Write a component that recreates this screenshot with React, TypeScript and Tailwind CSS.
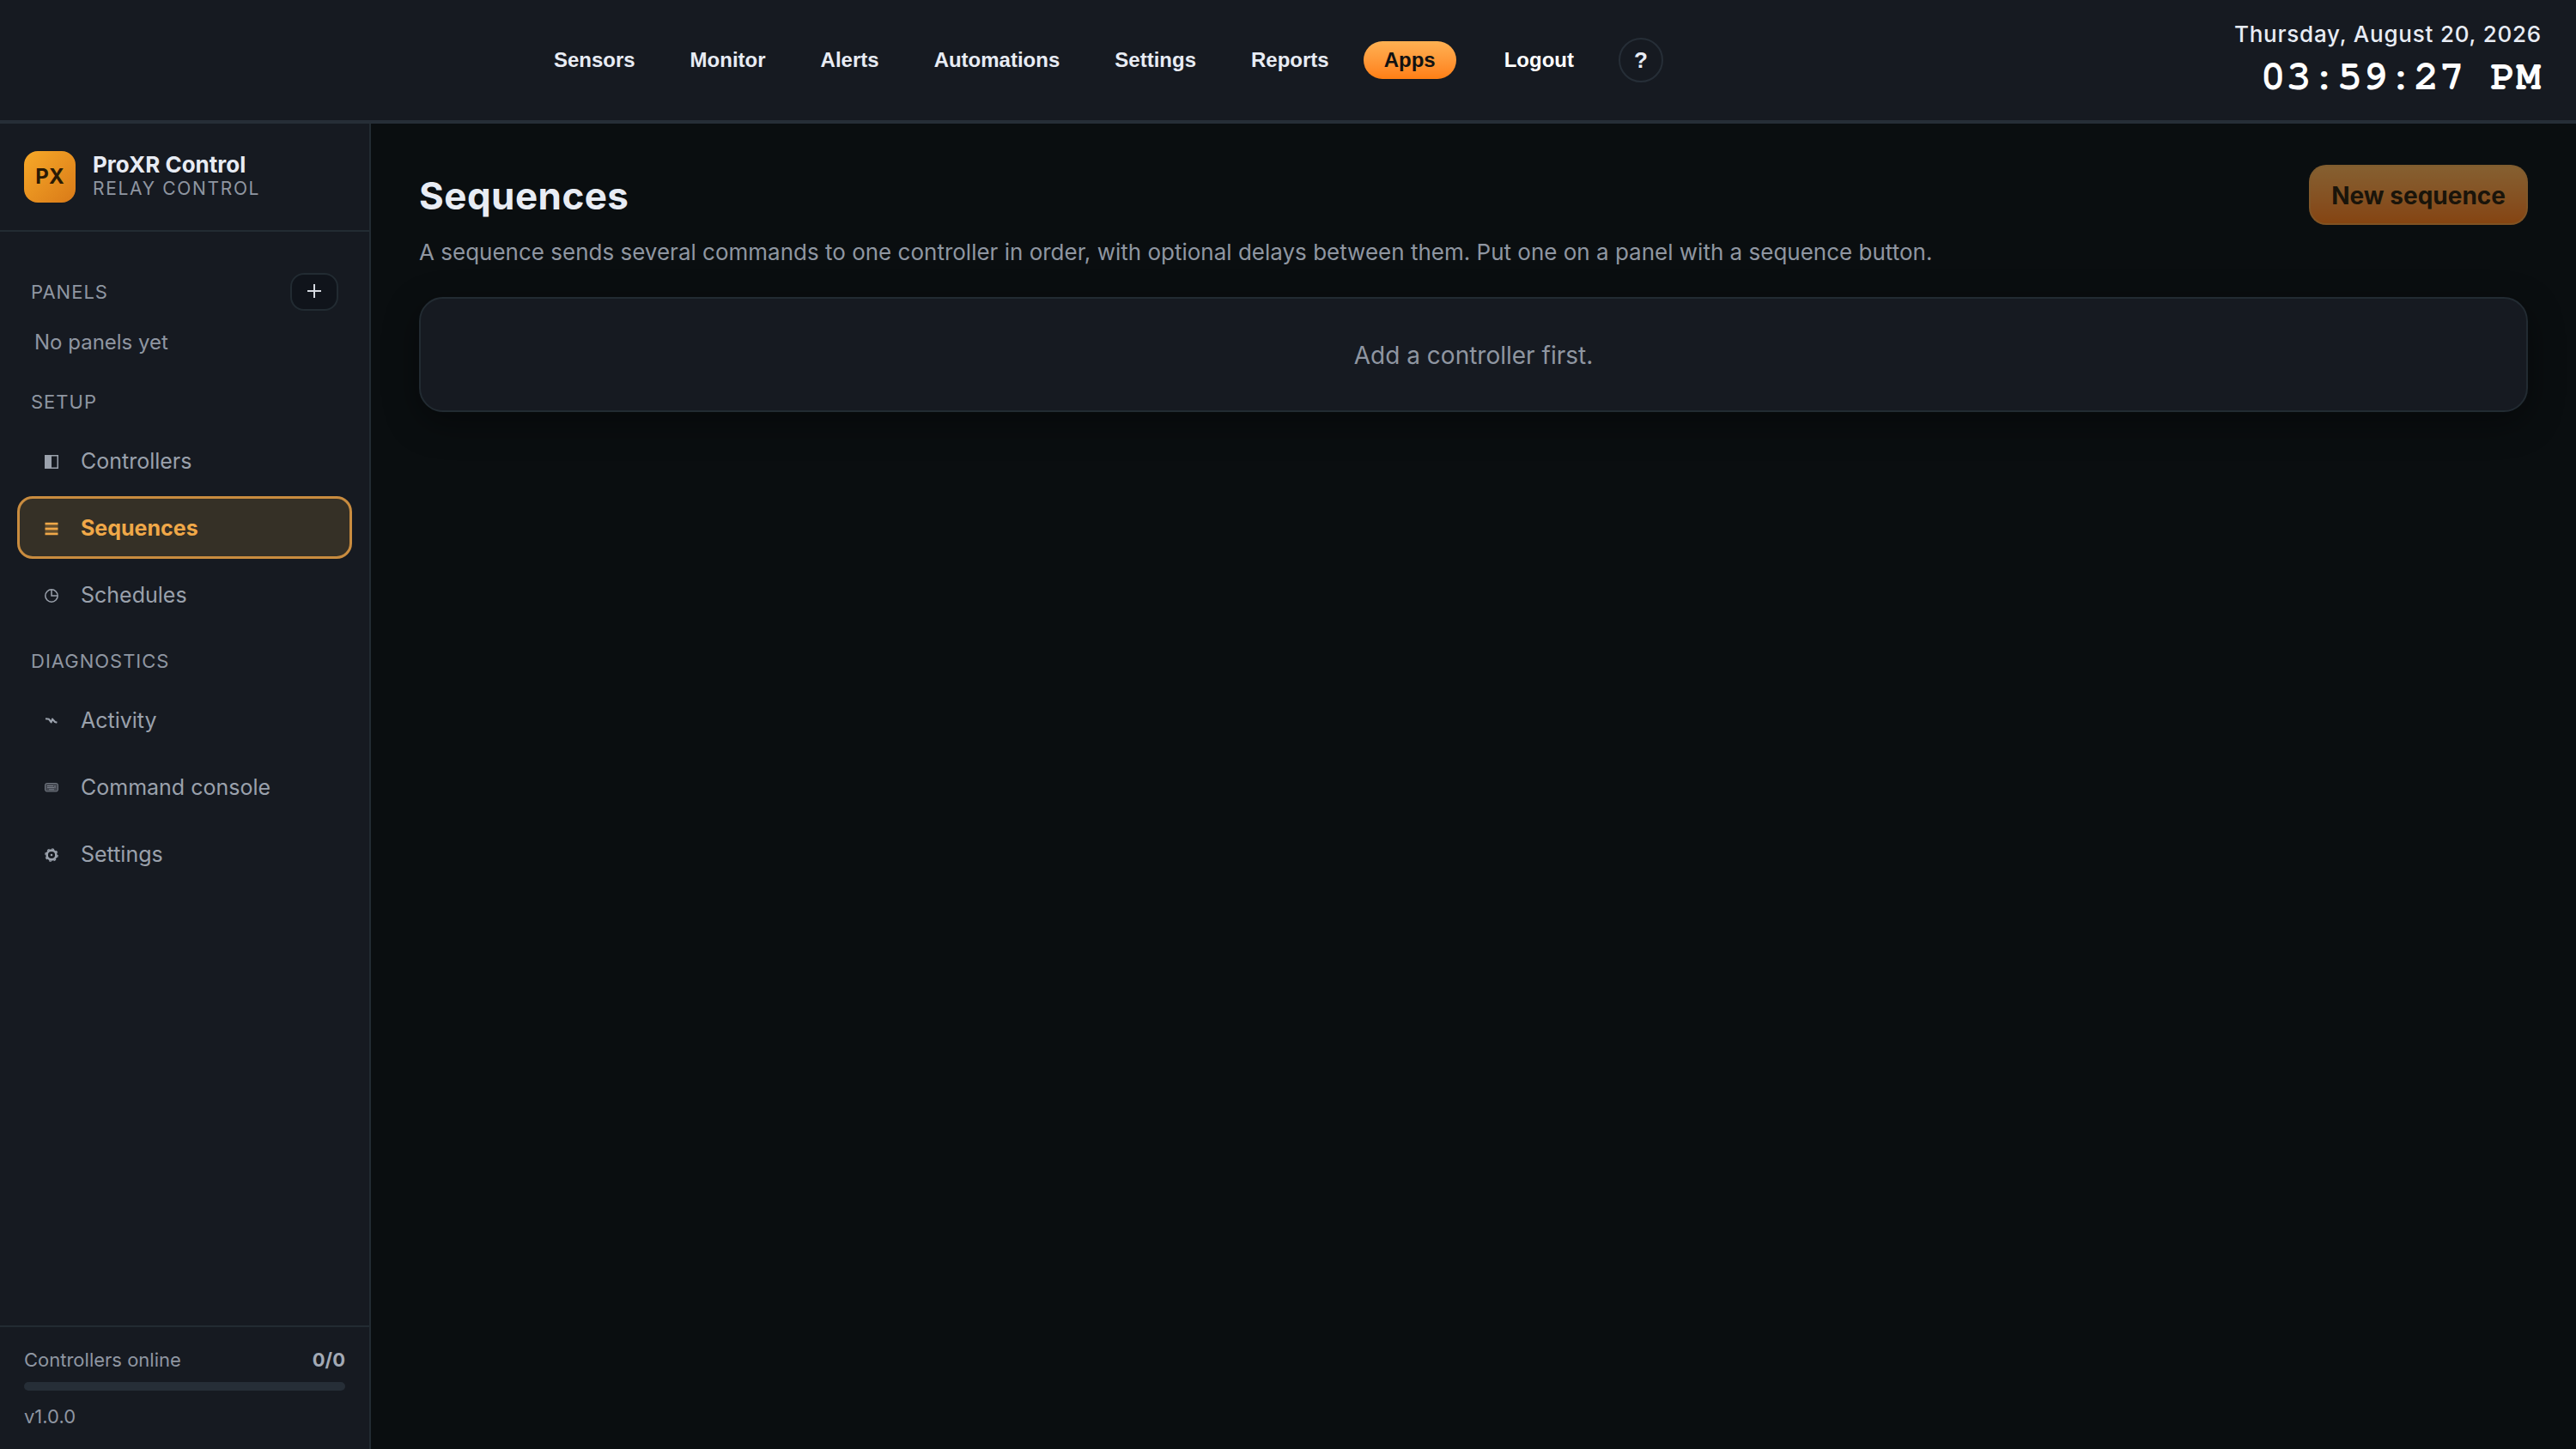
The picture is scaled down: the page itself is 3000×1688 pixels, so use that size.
import type { ReactNode } from "react";

const links = ["Sensors", "Monitor", "Alerts", "Automations", "Settings", "Reports"];

function Icon({ children }: { children: ReactNode }) {
  return (
    <span className="flex w-9 justify-center">
      <svg viewBox="0 0 16 16" className="size-4" fill="none" stroke="currentColor" aria-hidden="true">
        {children}
      </svg>
    </span>
  );
}

const panelIcon = (
  <Icon>
    <rect x="0.75" y="0.75" width="14.5" height="14.5" strokeWidth="1.5" />
    <rect x="0.5" y="0.5" width="7.5" height="15" fill="currentColor" stroke="none" />
  </Icon>
);
const listIcon = (
  <Icon>
    <path d="M0.5 2.2h15M0.5 8h15M0.5 13.8h15" strokeWidth="2.8" />
    <path d="M0.5 5h15M0.5 11h15" strokeWidth="2" opacity="0.25" />
  </Icon>
);
const clockIcon = (
  <Icon>
    <circle cx="8" cy="8" r="7.2" strokeWidth="1.5" />
    <path d="M8 1v7h7" strokeWidth="1.5" />
  </Icon>
);
const pulseIcon = (
  <Icon>
    <path d="M1 5.2l4 .6 2.6 3.6 1.4-3.8 3 3.4 2.4.8" strokeWidth="2.1" strokeLinejoin="round" />
  </Icon>
);
const keyboardIcon = (
  <Icon>
    <rect x="0.5" y="2.5" width="15" height="9.5" rx="2" fill="currentColor" fillOpacity="0.35" strokeOpacity="0.6" />
    <path d="M3 5.5h7M3 7.5h8M5 9.8h6M12 5v3" strokeOpacity="0.6" />
  </Icon>
);
const gearIcon = (
  <Icon>
    <circle cx="8" cy="8" r="5.4" strokeWidth="2.6" />
    <circle cx="8" cy="8" r="7.1" strokeWidth="1.4" strokeDasharray="2.8 2.78" />
    <circle cx="8" cy="8" r="1.3" fill="currentColor" stroke="none" />
  </Icon>
);

function NavItem({ icon, label, active }: { icon: ReactNode; label: string; active?: boolean }) {
  return (
    <a
      href="#"
      aria-current={active ? "page" : undefined}
      className={
        active
          ? "flex h-[73px] items-center gap-4 rounded-[18px] border-3 border-[#c98c3f] bg-[#353026] px-[19px] pt-0.5 text-[25px] font-bold text-[#f0a848]"
          : "flex h-[73px] items-center gap-4 rounded-[18px] border-3 border-transparent px-[19px] pt-0.5 text-[25px] text-[#9aa1ac]"
      }
    >
      {icon}
      {label}
    </a>
  );
}

function SectionLabel({ children }: { children: ReactNode }) {
  return <h2 className="text-[22px] leading-8 tracking-[1px] text-[#8f96a1]">{children}</h2>;
}

function Section({ title, children }: { title: string; children: ReactNode }) {
  return (
    <section>
      <div className="mb-4 px-4">
        <SectionLabel>{title}</SectionLabel>
      </div>
      <div className="flex flex-col gap-[5px]">{children}</div>
    </section>
  );
}

export default function App() {
  return (
    <div className="flex min-h-screen flex-col bg-[#0a0e10] font-[Inter,sans-serif] text-[#e8ecf4]">
      <header className="flex h-36 items-center gap-11 border-b-4 border-[#262e37] bg-[#161a21] pr-10">
        <nav className="flex flex-1 items-center justify-center gap-4 font-['Liberation_Sans',Arial,sans-serif] text-2xl font-bold">
          {links.map((l) => (
            <a key={l} href="#" className="flex h-11 items-center px-6">
              {l}
            </a>
          ))}
          <a
            href="#"
            aria-current="page"
            className="flex h-11 items-center rounded-full bg-linear-to-b from-[#ffb152] to-[#ff7f12] px-6 text-[#111111]"
          >
            Apps
          </a>
          <a href="#" className="ml-4 flex h-11 items-center px-6 text-white">
            Logout
          </a>
          <button type="button" aria-label="Help" className="ml-3 size-[52px] rounded-full border-2 border-[#262e37] text-[26px]">
            ?
          </button>
        </nav>
        <div className="flex flex-col items-end">
          <time className="text-[26px] leading-10 font-medium tracking-[0.03em]">Thursday, August 20, 2026</time>
          <time className="font-['FreeMono','Courier_New','Liberation_Mono',monospace] text-5xl leading-[60px] font-bold tracking-[0.02em] text-white">
            03:59:27 PM
          </time>
        </div>
      </header>

      <div className="flex flex-1">
        <aside className="flex w-[432px] flex-col border-r-2 border-[#222b32] bg-[#161a21]">
          <div className="flex items-center gap-5 border-b-2 border-[#222b32] px-7 py-8">
            <div className="flex size-[60px] items-center justify-center rounded-2xl bg-linear-to-br from-[#f7a928] to-[#d97a18] text-2xl font-bold text-[#2a1a05]">
              PX
            </div>
            <div>
              <div className="text-[26px] leading-7 font-bold">ProXR Control</div>
              <div className="text-[21px] leading-7 tracking-[0.08em] text-[#8f96a1]">RELAY CONTROL</div>
            </div>
          </div>

          <nav className="flex flex-1 flex-col gap-[25px] px-5 pt-12">
            <section>
              <div className="flex items-center justify-between px-4">
                <SectionLabel>PANELS</SectionLabel>
                <button
                  type="button"
                  aria-label="Add panel"
                  className="flex h-11 w-14 items-center justify-center rounded-2xl border-2 border-[#222b32] bg-[#10141b]"
                >
                  <svg viewBox="0 0 16 16" className="mb-0.5 size-4" stroke="#d5d9e0" strokeWidth="2" aria-hidden="true">
                    <path d="M8 0v16M0 8h16" />
                  </svg>
                </button>
              </div>
              <p className="mt-[9px] px-5 text-2xl leading-[56px] text-[#8f96a1]">No panels yet</p>
            </section>
            <Section title="SETUP">
              <NavItem icon={panelIcon} label="Controllers" />
              <NavItem icon={listIcon} label="Sequences" active />
              <NavItem icon={clockIcon} label="Schedules" />
            </Section>
            <Section title="DIAGNOSTICS">
              <NavItem icon={pulseIcon} label="Activity" />
              <NavItem icon={keyboardIcon} label="Command console" />
              <NavItem icon={gearIcon} label="Settings" />
            </Section>
          </nav>

          <footer className="border-t-2 border-[#222b32] px-7 py-[22px] text-[22px] leading-8 text-[#8f96a1]">
            <div className="flex justify-between">
              <span>Controllers online</span>
              <span className="font-bold text-[#a3aab5]">0/0</span>
            </div>
            <div className="mt-2.5 h-2.5 rounded-full bg-[#262e37]" />
            <div className="mt-3.5">v1.0.0</div>
          </footer>
        </aside>

        <main className="flex-1 px-14 pt-12">
          <div className="flex items-center justify-between">
            <h1 className="pt-0.5 text-[44px] font-bold tracking-[0.01em]">Sequences</h1>
            <button
              type="button"
              disabled
              className="h-[70px] rounded-[20px] border-2 border-[#f0a64c]/60 bg-linear-to-b from-[#ffb152] to-[#ff7a0e] bg-origin-border px-6 pt-0.5 text-[28px] font-bold text-[#2a1a05] opacity-50"
            >
              New sequence
            </button>
          </div>
          <p className="mt-3 text-[26px] leading-10 text-[#8f96a1]">
            A sequence sends several commands to one controller in order, with optional delays between them. Put one on a
            panel with a sequence button.
          </p>
          <div className="mt-8 flex h-[134px] items-center justify-center rounded-[28px] border-2 border-[#222b32] bg-[#161a21] pt-0.5 text-[28px] text-[#8f96a1] shadow-[0_12px_40px_rgba(0,0,0,0.4)]">
            Add a controller first.
          </div>
        </main>
      </div>
    </div>
  );
}
